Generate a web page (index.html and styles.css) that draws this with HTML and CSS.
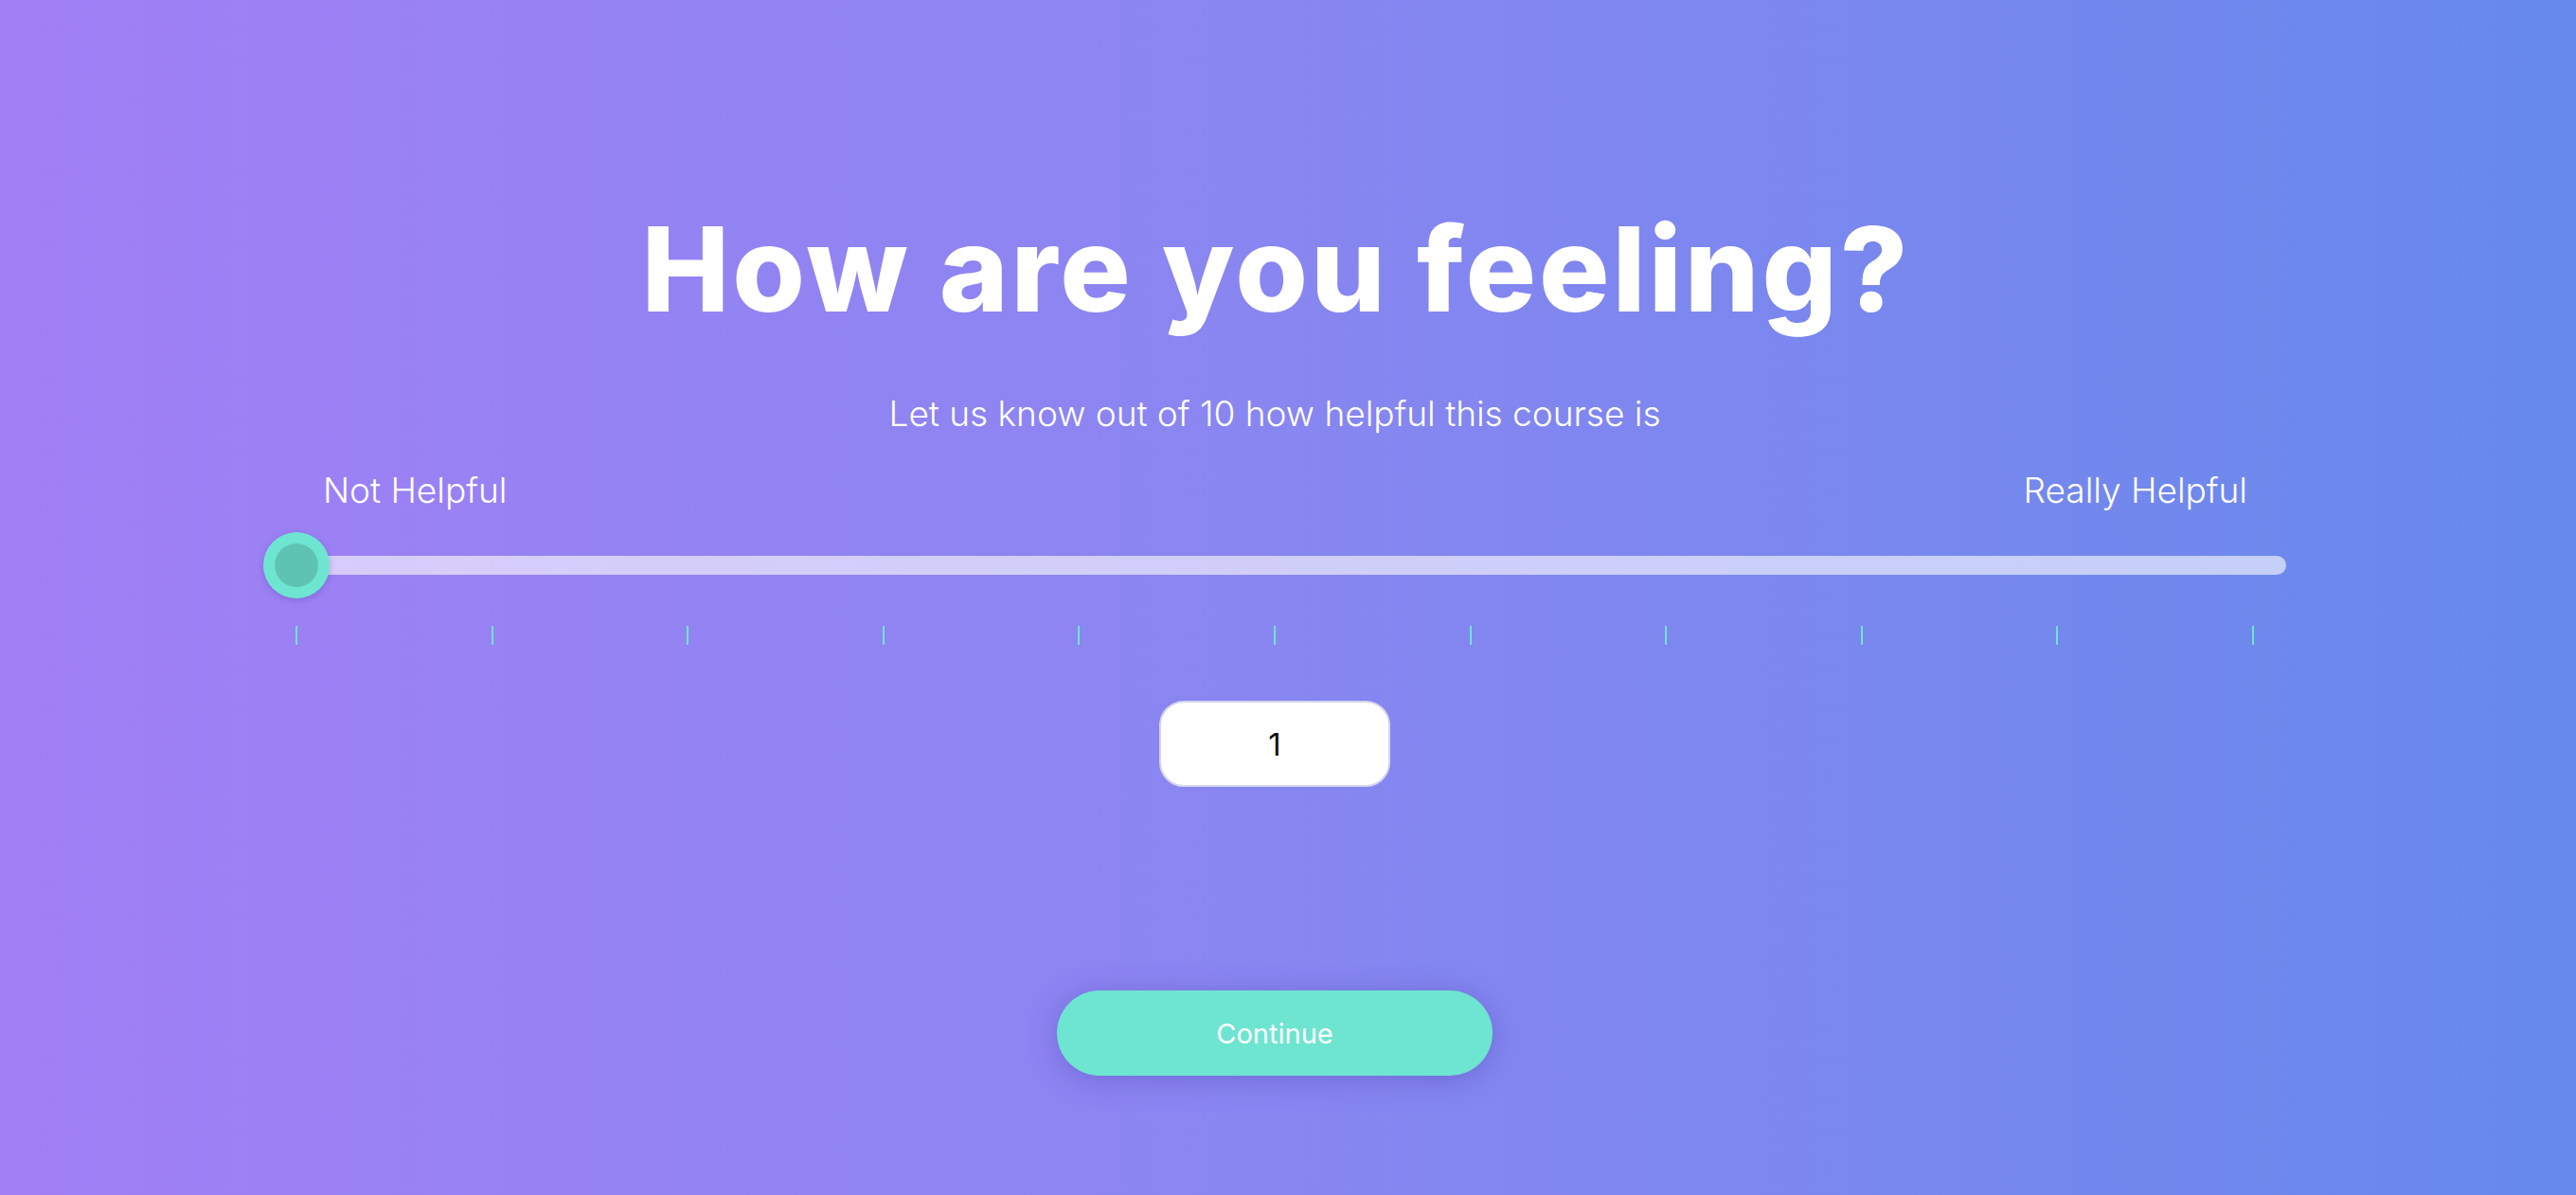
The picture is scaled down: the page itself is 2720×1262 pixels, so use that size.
FILE: index.html
```html
<!DOCTYPE html>
<html lang="en">
<head>
<meta charset="utf-8">
<title>How are you feeling?</title>
<link rel="stylesheet" href="styles.css">
</head>
<body>
<main class="page">
  <h1 class="title">How are you feeling?</h1>
  <p class="subtitle">Let us know out of 10 how helpful this course is</p>
  <section class="slider">
    <div class="slider-labels">
      <span class="label">Not Helpful</span>
      <span class="label">Really Helpful</span>
    </div>
    <div class="track-row">
      <div class="track"></div>
      <div class="knob"><div class="knob-core"></div></div>
    </div>
    <div class="ticks">
      <span class="tick"></span><span class="tick"></span><span class="tick"></span><span class="tick"></span>
      <span class="tick"></span><span class="tick"></span><span class="tick"></span><span class="tick"></span>
      <span class="tick"></span><span class="tick"></span><span class="tick"></span>
    </div>
  </section>
  <div class="value-box">1</div>
  <button class="continue" type="button">Continue</button>
</main>
</body>
</html>
```
FILE: styles.css
```css
html, body {
  margin: 0;
  padding: 0;
  height: 100%;
}

body {
  background: linear-gradient(to right, #a17ff5 0%, #8886f1 50%, #6689eb 100%);
  font-family: "Inter", "Noto Sans", sans-serif;
  color: #ffffff;
  overflow: hidden;
}

.page {
  display: flex;
  flex-direction: column;
  align-items: center;
  padding-right: 28px;
  padding-top: 222px;
}

.title {
  margin: 0;
  font-size: 124px;
  line-height: 1;
  font-weight: 800;
  letter-spacing: 3px;
  text-indent: 3px;
  white-space: nowrap;
}

.subtitle {
  margin: 72px 0 0;
  font-size: 37px;
  line-height: 1;
  font-weight: 300;
}

.slider {
  width: 2136px;
  margin-top: 44px;
  display: flex;
  flex-direction: column;
}

.slider-labels {
  display: flex;
  justify-content: space-between;
  padding: 0 41px 0 63px;
}

.label {
  font-size: 37px;
  line-height: 1;
  font-weight: 300;
}

.track-row {
  position: relative;
  height: 70px;
  margin-top: 26px;
  display: flex;
  align-items: center;
}

.track {
  flex: 1;
  height: 20px;
  border-radius: 10px;
  background: rgba(255, 255, 255, 0.6);
}

.knob {
  position: absolute;
  left: 0;
  top: 0;
  width: 70px;
  height: 70px;
  box-sizing: border-box;
  border-radius: 50%;
  background: #6ee5d0;
  display: flex;
  align-items: center;
  justify-content: center;
  box-shadow: 0 2px 6px rgba(60, 40, 140, 0.25);
}

.knob-core {
  width: 46px;
  height: 46px;
  border-radius: 50%;
  background: #5fc3b4;
}

.ticks {
  display: flex;
  justify-content: space-between;
  padding: 0 34px 0 34px;
  margin-top: 29px;
}

.tick {
  width: 2px;
  height: 20px;
  background: #6ee5d0;
}

.value-box {
  margin-top: 59px;
  width: 244px;
  height: 91px;
  box-sizing: border-box;
  border: 2px solid #d3d6ea;
  border-radius: 26px;
  background: #ffffff;
  color: #111111;
  font-size: 33px;
  font-weight: 400;
  display: flex;
  align-items: center;
  justify-content: center;
}

.continue {
  margin-top: 215px;
  width: 460px;
  height: 90px;
  border: none;
  border-radius: 45px;
  background: #6ee5d0;
  color: #ffffff;
  font-family: "Inter", "Noto Sans", sans-serif;
  font-size: 29px;
  font-weight: 400;
  box-shadow: 0 4px 30px rgba(70, 55, 170, 0.35);
  cursor: pointer;
}
```
